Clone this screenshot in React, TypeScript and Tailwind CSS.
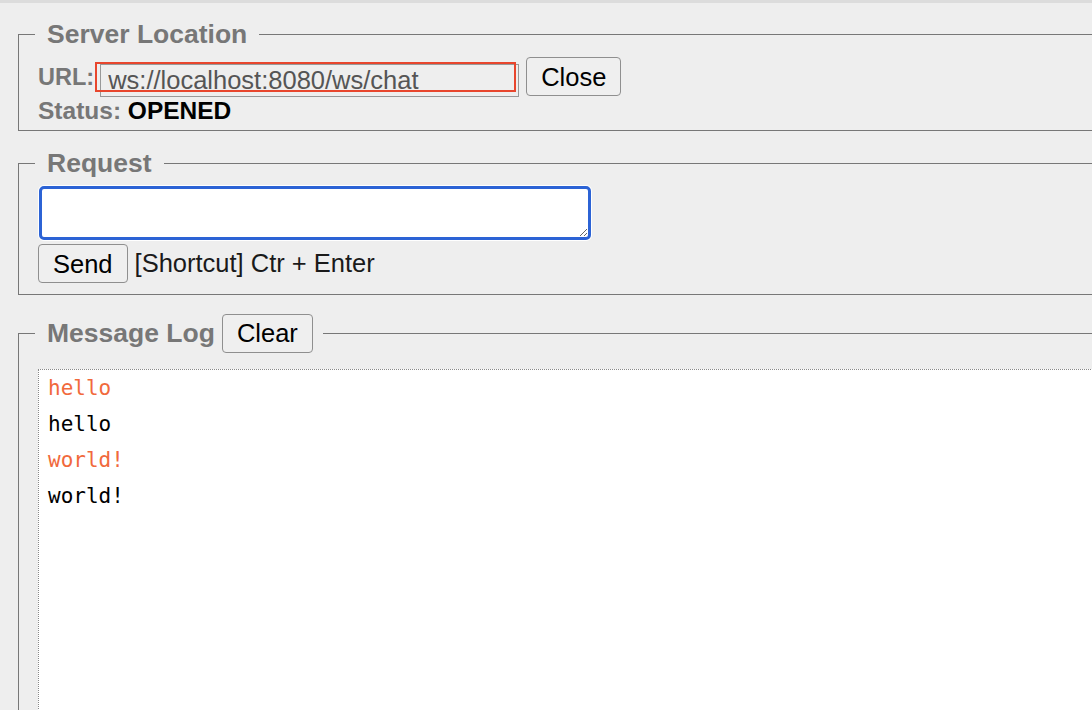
import React, { useState } from 'react';

const logLines = [
  { text: 'hello', sent: true },
  { text: 'hello', sent: false },
  { text: 'world!', sent: true },
  { text: 'world!', sent: false },
];

export default function App() {
  const [url, setUrl] = useState('ws://localhost:8080/ws/chat');
  const [request, setRequest] = useState('');

  return (
    <div
      className="h-[710px] w-[1092px] overflow-hidden border-t-[3px] border-[#dcdcdc] bg-[#eeeeee]"
      style={{ fontFamily: '"Liberation Sans", Arial, sans-serif' }}
    >
      <div className="w-[1260px] pl-[18px] pt-[16px]">
        {/* server location */}
        <fieldset className="border border-[#777777] pb-[6px] pl-[19px] pt-[8px]">
          <legend className="ml-[-3px] px-[12px] text-[26.5px] font-bold leading-[30px] text-[#777777]">
            Server Location
          </legend>
          <div className="flex items-start">
            <span className="mt-[7px] text-[23.5px] font-bold leading-[27px] text-[#777777]">URL:</span>
            <div className="relative ml-[6px] mt-[7px]">
              <input
                type="text"
                value={url}
                onChange={(e) => setUrl(e.target.value)}
                className="h-[33px] w-[419px] border border-[#999999] bg-transparent pl-[7px] text-[25.5px] text-[#555555] outline-none"
              />
              <div className="pointer-events-none absolute left-[-5px] top-[-2px] h-[30px] w-[421px] border-[2.5px] border-[#e8462d]" />
            </div>
            <button className="ml-[7px] h-[39px] rounded-[4px] border border-[#8f8f8f] bg-[#efefef] px-[14px] text-[25.5px] text-black">
              Close
            </button>
          </div>
          <div className="text-[24.5px] font-bold leading-[27px]">
            <span className="text-[#777777]">Status: </span>
            <span className="text-black">OPENED</span>
          </div>
        </fieldset>

        {/* request */}
        <fieldset className="mt-[17px] border border-[#777777] pb-[11px] pl-[19px] pt-[8px]">
          <legend className="ml-[-3px] px-[12px] text-[26.5px] font-bold leading-[30px] text-[#777777]">
            Request
          </legend>
          <textarea
            value={request}
            onChange={(e) => setRequest(e.target.value)}
            className="ml-[1px] block h-[54px] w-[552px] rounded-[5px] border-[3px] border-[#2c63d5] bg-white text-[20px] shadow-[0_0_0_1px_#ffffff] outline-none"
          />
          <div className="mt-[4px] flex items-center">
            <button className="h-[39px] rounded-[4px] border border-[#8f8f8f] bg-[#efefef] px-[14px] text-[25.5px] text-black">
              Send
            </button>
            <span className="ml-[7px] text-[25.5px] text-[#1a1a1a]">[Shortcut] Ctr + Enter</span>
          </div>
        </fieldset>

        {/* message log */}
        <fieldset className="mt-[18px] border border-[#777777] pl-[19px] pt-[16px]">
          <legend className="ml-[-3px] pl-[12px] pr-[10px] leading-[39px]">
            <span className="align-middle text-[26.5px] font-bold text-[#777777]">Message Log</span>
            <button className="ml-[7px] h-[39px] rounded-[4px] border border-[#8f8f8f] bg-[#efefef] px-[14px] align-middle text-[25.5px] leading-[37px] text-black">
              Clear
            </button>
          </legend>
          <div
            className="h-[420px] border border-dotted border-[#888888] bg-white pl-[9px] text-[21px] leading-[36px]"
            style={{ fontFamily: '"DejaVu Sans Mono", monospace' }}
          >
            {logLines.map((line, i) => (
              <div key={i} className={line.sent ? 'text-[#f1693c]' : 'text-black'}>
                {line.text}
              </div>
            ))}
          </div>
        </fieldset>
      </div>
    </div>
  );
}
